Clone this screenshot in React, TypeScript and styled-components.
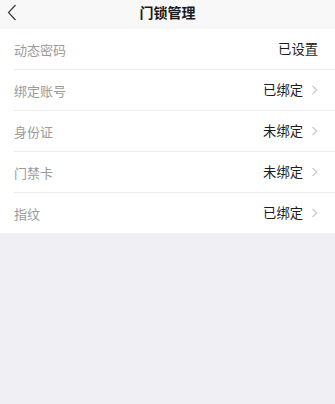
import React from "react";
import styled, { createGlobalStyle } from "styled-components";

const Global = createGlobalStyle`
  html, body { margin: 0; padding: 0; background: #efeff4; }
  body { font-family: "Noto Sans CJK SC", "Noto Sans", sans-serif; }
  * { box-sizing: border-box; }
`;

const Page = styled.div`
  width: 335px;
  min-height: 404px;
  background: #efeff4;
  display: flex;
  flex-direction: column;
`;

const Header = styled.div`
  height: 29px;
  background: #f8f8f8;
  display: flex;
  align-items: center;
  justify-content: center;
  position: relative;
`;

const Back = styled.div`
  position: absolute;
  left: 7px;
  top: 4px;
  width: 10px;
  height: 17px;
  display: flex;
`;

const Title = styled.div`
  font-size: 14px;
  font-weight: 700;
  color: #1a1a1a;
  margin-top: -5px;
`;

const List = styled.div`
  background: #fff;
  padding-left: 14px;
`;

const Row = styled.div`
  height: 41px;
  display: flex;
  align-items: center;
  justify-content: space-between;
  padding-right: 17px;
  border-bottom: 1px solid #ececec;
  &:last-child { border-bottom: none; height: 40px; }
`;

const Label = styled.span`
  font-size: 13px;
  color: #9a9a9a;
  line-height: 1;
`;

const Right = styled.div`
  display: flex;
  align-items: center;
  gap: 8px;
`;

const Value = styled.span`
  font-size: 13.3px;
  color: #1c1c1c;
  line-height: 1;
`;

const Arrow = () => (
  <svg width="7" height="10" viewBox="0 0 7 10" fill="none">
    <path d="M1.5 1 L5.8 5 L1.5 9" stroke="#c9c9c9" strokeWidth="1.2" />
  </svg>
);

const rows = [
  { label: "动态密码", value: "已设置", arrow: false },
  { label: "绑定账号", value: "已绑定", arrow: true },
  { label: "身份证", value: "未绑定", arrow: true },
  { label: "门禁卡", value: "未绑定", arrow: true },
  { label: "指纹", value: "已绑定", arrow: true },
];

export default function App() {
  return (
    <Page>
      <Global />
      <Header>
        <Back>
          <svg width="10" height="17" viewBox="0 0 10 17" fill="none">
            <path d="M8.5 1 L1.5 8.5 L8.5 16" stroke="#333" strokeWidth="1.1" />
          </svg>
        </Back>
        <Title>门锁管理</Title>
      </Header>
      <List>
        {rows.map((r) => (
          <Row key={r.label}>
            <Label>{r.label}</Label>
            <Right>
              <Value>{r.value}</Value>
              {r.arrow && <Arrow />}
            </Right>
          </Row>
        ))}
      </List>
    </Page>
  );
}
